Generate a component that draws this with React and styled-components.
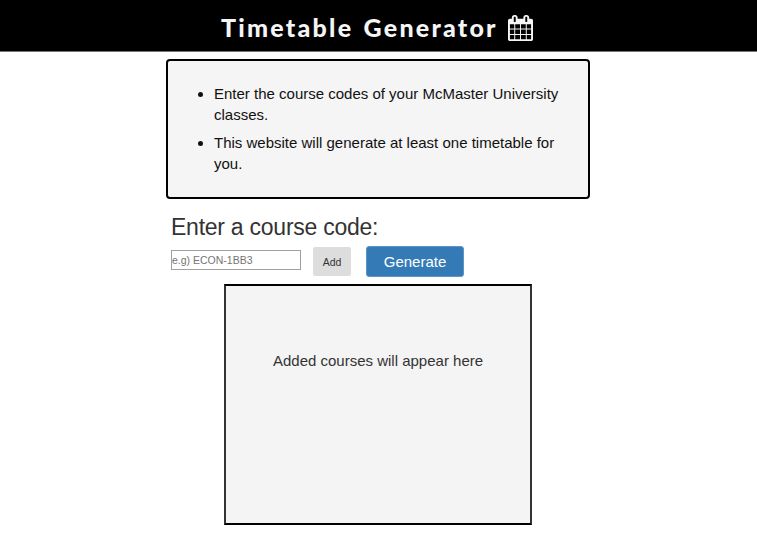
import React from "react";
import styled, { createGlobalStyle } from "styled-components";

const GlobalStyle = createGlobalStyle`
  *, *::before, *::after { box-sizing: border-box; }
  body {
    margin: 0;
    background: #fff;
    color: #333;
    font-family: "Liberation Sans", Arial, sans-serif;
  }
`;

const Header = styled.header`
  display: flex;
  align-items: flex-start;
  height: 52px;
  padding-left: 221px;
  background: #000;
  border-bottom: 1px solid #777;
  color: #f5f5f5;
`;

const Title = styled.h1`
  width: 287px;
  margin: 11px 0 0;
  font: 900 25px/32px Lato, sans-serif;
  letter-spacing: 2.25px;
  word-spacing: 2px;
  white-space: nowrap;
`;

const Calendar = styled.svg`
  width: 25px;
  height: 26px;
  margin-top: 15px;
  fill: currentColor;
`;

const Main = styled.main`
  width: 423px;
  margin: 7px 0 0 166px;
`;

const Instructions = styled.section`
  width: 424px;
  height: 140px;
  padding: 22px 24px 0 6px;
  background: #f5f5f5;
  border: 2px solid #000;
  border-radius: 4px;
`;

const List = styled.ul`
  margin: 0;
  padding-left: 40px;
`;

const Item = styled.li`
  margin-bottom: 7px;
  color: #111;
  font-size: 15px;
  line-height: 21px;
`;

const Heading = styled.h2`
  margin: 13px 0 0 5px;
  font-size: 23px;
  font-weight: 400;
  letter-spacing: -0.25px;
  line-height: 30px;
`;

const Form = styled.div`
  display: flex;
  align-items: flex-start;
  height: 42px;
  padding: 4px 0 0 5px;
`;

const CodeInput = styled.input`
  width: 130px;
  height: 20px;
  margin-top: 4px;
  padding: 0;
  border: 1px solid #a0a0a0;
  border-radius: 0;
  background: #fff;
  font: 10.5px "Liberation Sans", Arial, sans-serif;
  outline: none;
  &::placeholder { color: #757575; opacity: 1; }
`;

const Button = styled.button`
  padding: 0;
  border: 0;
  border-radius: 2px;
  font-family: "Liberation Sans", Arial, sans-serif;
`;

const AddButton = styled(Button)`
  width: 38px;
  height: 29px;
  margin: 1px 0 0 12px;
  background: #ddd;
  color: #333;
  font-size: 10.5px;
`;

const GenerateButton = styled(Button)`
  width: 98px;
  height: 31px;
  margin-left: 15px;
  background: #337ab7;
  border: 1px solid #5b96c7;
  border-radius: 3px;
  color: #fff;
  font-size: 15px;
`;

const Courses = styled.section`
  width: 308px;
  height: 241px;
  margin-left: 58px;
  padding-top: 64px;
  background: #f4f4f4;
  border: 2px solid #333;
  border-top-color: #000;
  border-bottom-color: #000;
  font-size: 15px;
  line-height: 21px;
  text-align: center;
`;

export default function App() {
  return (
    <>
      <GlobalStyle />
      <Header>
        <Title>Timetable Generator</Title>
        <Calendar viewBox="64 0 1664 1792" preserveAspectRatio="none" aria-hidden="true">
          <path d="M192 1664h288v-288h-288v288zm352 0h320v-288h-320v288zm-352-352h288v-320h-288v320zm352 0h320v-320h-320v320zm-352-384h288v-288h-288v288zm736 736h320v-288h-320v288zm-384-736h320v-288h-320v288zm768 736h288v-288h-288v288zm-384-352h320v-320h-320v320zm-352-864v-288q0-13-9.5-22.5t-22.5-9.5h-64q-13 0-22.5 9.5t-9.5 22.5v288q0 13 9.5 22.5t22.5 9.5h64q13 0 22.5-9.5t9.5-22.5zm736 864h288v-320h-288v320zm-384-384h320v-288h-320v288zm384 0h288v-288h-288v288zm32-480v-288q0-13-9.5-22.5t-22.5-9.5h-64q-13 0-22.5 9.5t-9.5 22.5v288q0 13 9.5 22.5t22.5 9.5h64q13 0 22.5-9.5t9.5-22.5zm384-64v1280q0 52-38 90t-90 38h-1408q-52 0-90-38t-38-90v-1280q0-52 38-90t90-38h128v-96q0-66 47-113t113-47h64q66 0 113 47t47 113v96h384v-96q0-66 47-113t113-47h64q66 0 113 47t47 113v96h128q52 0 90 38t38 90z" />
        </Calendar>
      </Header>
      <Main>
        <Instructions>
          <List>
            <Item>Enter the course codes of your McMaster University classes.</Item>
            <Item>This website will generate at least one timetable for you.</Item>
          </List>
        </Instructions>
        <Heading>Enter a course code:</Heading>
        <Form>
          <CodeInput placeholder="e.g) ECON-1BB3" aria-label="Course code" />
          <AddButton>Add</AddButton>
          <GenerateButton>Generate</GenerateButton>
        </Form>
        <Courses>Added courses will appear here</Courses>
      </Main>
    </>
  );
}
